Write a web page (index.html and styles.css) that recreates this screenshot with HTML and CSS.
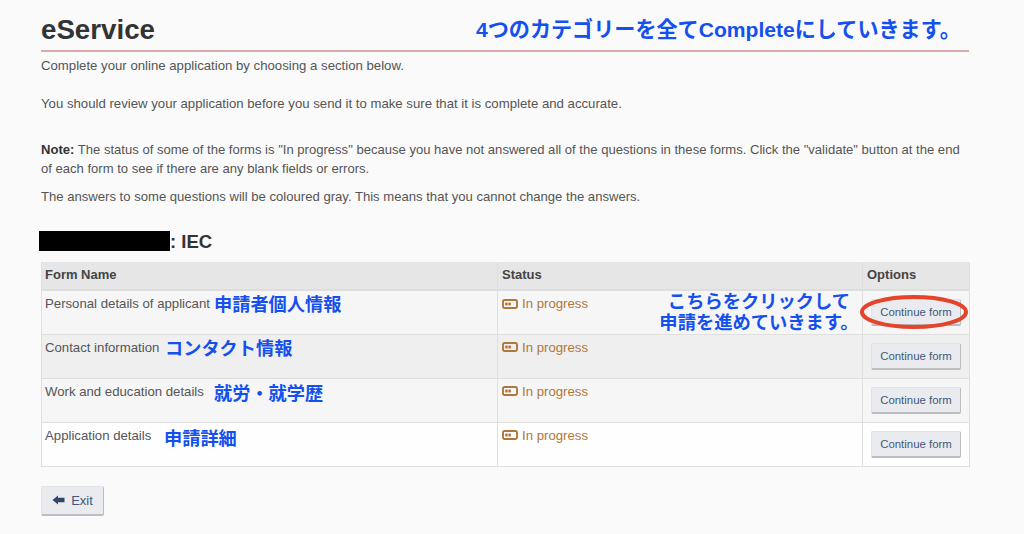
FILE: index.html
```html
<!DOCTYPE html>
<html lang="ja">
<head>
<meta charset="utf-8">
<title>eService</title>
<link rel="stylesheet" href="styles.css">
</head>
<body>
<main class="page">
  <h1 class="title">eService</h1>
  <p class="intro">Complete your online application by choosing a section below.</p>
  <p class="review">You should review your application before you send it to make sure that it is complete and accurate.</p>
  <p class="note"><strong>Note:</strong> The status of some of the forms is "In progress" because you have not answered all of the questions in these forms. Click the "validate" button at the end of each form to see if there are any blank fields or errors.</p>
  <p class="gray">The answers to some questions will be coloured gray. This means that you cannot change the answers.</p>
  <h2 class="app"><span class="redact"></span>: IEC</h2>
  <table class="forms">
    <thead>
      <tr><th class="c1">Form Name</th><th class="c2">Status</th><th class="c3">Options</th></tr>
    </thead>
    <tbody>
      <tr class="odd">
        <td>Personal details of applicant</td>
        <td><span class="status"><svg class="ico" viewBox="0 0 16 10"><rect x="1" y="1" width="14" height="8" rx="1.5" fill="none" stroke="#b0773a" stroke-width="1.9"/><rect x="3.3" y="3.6" width="2.3" height="2.8" fill="#a86c2e"/><rect x="6.5" y="3.6" width="2.3" height="2.8" fill="#a86c2e"/></svg>In progress</span></td>
        <td class="opt"><button class="btn">Continue form</button></td>
      </tr>
      <tr class="even">
        <td>Contact information</td>
        <td><span class="status"><svg class="ico" viewBox="0 0 16 10"><rect x="1" y="1" width="14" height="8" rx="1.5" fill="none" stroke="#b0773a" stroke-width="1.9"/><rect x="3.3" y="3.6" width="2.3" height="2.8" fill="#a86c2e"/><rect x="6.5" y="3.6" width="2.3" height="2.8" fill="#a86c2e"/></svg>In progress</span></td>
        <td class="opt"><button class="btn">Continue form</button></td>
      </tr>
      <tr class="odd">
        <td>Work and education details</td>
        <td><span class="status"><svg class="ico" viewBox="0 0 16 10"><rect x="1" y="1" width="14" height="8" rx="1.5" fill="none" stroke="#b0773a" stroke-width="1.9"/><rect x="3.3" y="3.6" width="2.3" height="2.8" fill="#a86c2e"/><rect x="6.5" y="3.6" width="2.3" height="2.8" fill="#a86c2e"/></svg>In progress</span></td>
        <td class="opt"><button class="btn">Continue form</button></td>
      </tr>
      <tr class="white">
        <td>Application details</td>
        <td><span class="status"><svg class="ico" viewBox="0 0 16 10"><rect x="1" y="1" width="14" height="8" rx="1.5" fill="none" stroke="#b0773a" stroke-width="1.9"/><rect x="3.3" y="3.6" width="2.3" height="2.8" fill="#a86c2e"/><rect x="6.5" y="3.6" width="2.3" height="2.8" fill="#a86c2e"/></svg>In progress</span></td>
        <td class="opt"><button class="btn">Continue form</button></td>
      </tr>
    </tbody>
  </table>
  <button class="btn exit"><svg class="arrow" viewBox="0 0 13 10"><path d="M0.5 5 L6 0.5 V2.8 H12.5 V7.2 H6 V9.5 Z" fill="#34476a"/></svg>Exit</button>
</main>
<div class="note-jp n-top">4つのカテゴリーを全てCompleteにしていきます。</div>
<div class="note-jp n-r1">申請者個人情報</div>
<div class="note-jp n-r2">コンタクト情報</div>
<div class="note-jp n-r3">就労・就学歴</div>
<div class="note-jp n-r4">申請詳細</div>
<div class="note-jp n-click">こちらをクリックして<br>申請を進めていきます。</div>
<svg class="ring" viewBox="0 0 108 36"><ellipse cx="54" cy="18" rx="52" ry="15" fill="none" stroke="#e5432a" stroke-width="4"/></svg>
</body>
</html>
```
FILE: styles.css
```css
* { box-sizing: border-box; }
html, body { margin: 0; padding: 0; }
body {
  position: relative;
  width: 1024px;
  height: 534px;
  overflow: hidden;
  background: #fafafa;
  color: #555;
  font-family: "Liberation Sans", Arial, sans-serif;
  font-size: 13.2px;
  line-height: 19px;
}
.page { padding: 0 55px 0 41px; }
p { margin: 0; }
.title {
  margin: 0;
  padding-top: 13px;
  height: 52px;
  border-bottom: 2px solid #dba9a9;
  color: #333;
  font-size: 27.7px;
  line-height: 34px;
  font-weight: bold;
}
.intro { margin-top: 4px; }
.review { margin-top: 19px; }
.note { margin-top: 27px; font-size: 13.07px; }
.note strong { color: #333; }
.gray { margin-top: 9px; font-size: 13.1px; }
.app {
  display: flex;
  align-items: center;
  margin: 25px 0 0 -2px;
  height: 20px;
  color: #333;
  font-size: 18.5px;
  font-weight: bold;
}
.redact { width: 131px; height: 20px; background: #000; }
.forms {
  margin-top: 11px;
  width: 928px;
  border-collapse: collapse;
  table-layout: fixed;
}
.forms th, .forms td {
  border: 1px solid #dfdfdf;
  border-top: 0;
  padding: 3px 4px;
  vertical-align: top;
  text-align: left;
}
.forms th {
  height: 28px;
  padding-top: 3px;
  background: #e6e6e6;
  color: #444;
  font-size: 13px;
  font-weight: bold;
  border-bottom: 2px solid #dedede;
}
.c1 { width: 456px; }
.c2 { width: 365px; }
.c3 { width: 107px; }
.forms td { height: 44px; padding-top: 3px; }
.forms th:first-child, .forms td:first-child { padding-left: 3px; }
.odd td { background: #f6f6f6; }
.even td { background: #efefef; }
.white td { background: #fefefe; }
.status { display: flex; align-items: center; gap: 4px; color: #b0773a; }
.ico { width: 16px; height: 10px; display: block; }
.forms td.opt { padding: 8px 8px 0; }
.btn {
  display: inline-flex;
  align-items: center;
  justify-content: center;
  height: 27px;
  width: 90px;
  padding: 0;
  border: 1px solid #e0e2e5;
  border-right-color: #bbbdc0;
  border-bottom: 2px solid #bbbdc0;
  border-radius: 2px;
  background: #e9ebee;
  color: #44587a;
  font-family: "Liberation Sans", Arial, sans-serif;
  font-size: 11.4px;
}
.exit {
  margin-top: 19px;
  width: 63px;
  height: 30px;
  gap: 6px;
  font-size: 13px;
}
.arrow { width: 13px; height: 10px; }
.note-jp {
  position: absolute;
  color: #1450ee;
  font-family: "Noto Sans CJK JP", "Liberation Sans", sans-serif;
  font-size: 18.2px;
  line-height: 22px;
  font-weight: bold;
  white-space: nowrap;
}
.n-top { left: 476px; top: 19px; font-size: 21.1px; font-family: "Liberation Sans", "Noto Sans CJK JP", sans-serif; }
.n-r1 { left: 214px; top: 292px; }
.n-r2 { left: 165px; top: 336px; }
.n-r3 { left: 214px; top: 381px; }
.n-r4 { left: 164px; top: 426px; }
.n-click { left: 659px; width: 200px; top: 290px; line-height: 21px; font-size: 18.3px; text-align: center; }
.ring { position: absolute; left: 860px; top: 294px; width: 108px; height: 36px; }
```
